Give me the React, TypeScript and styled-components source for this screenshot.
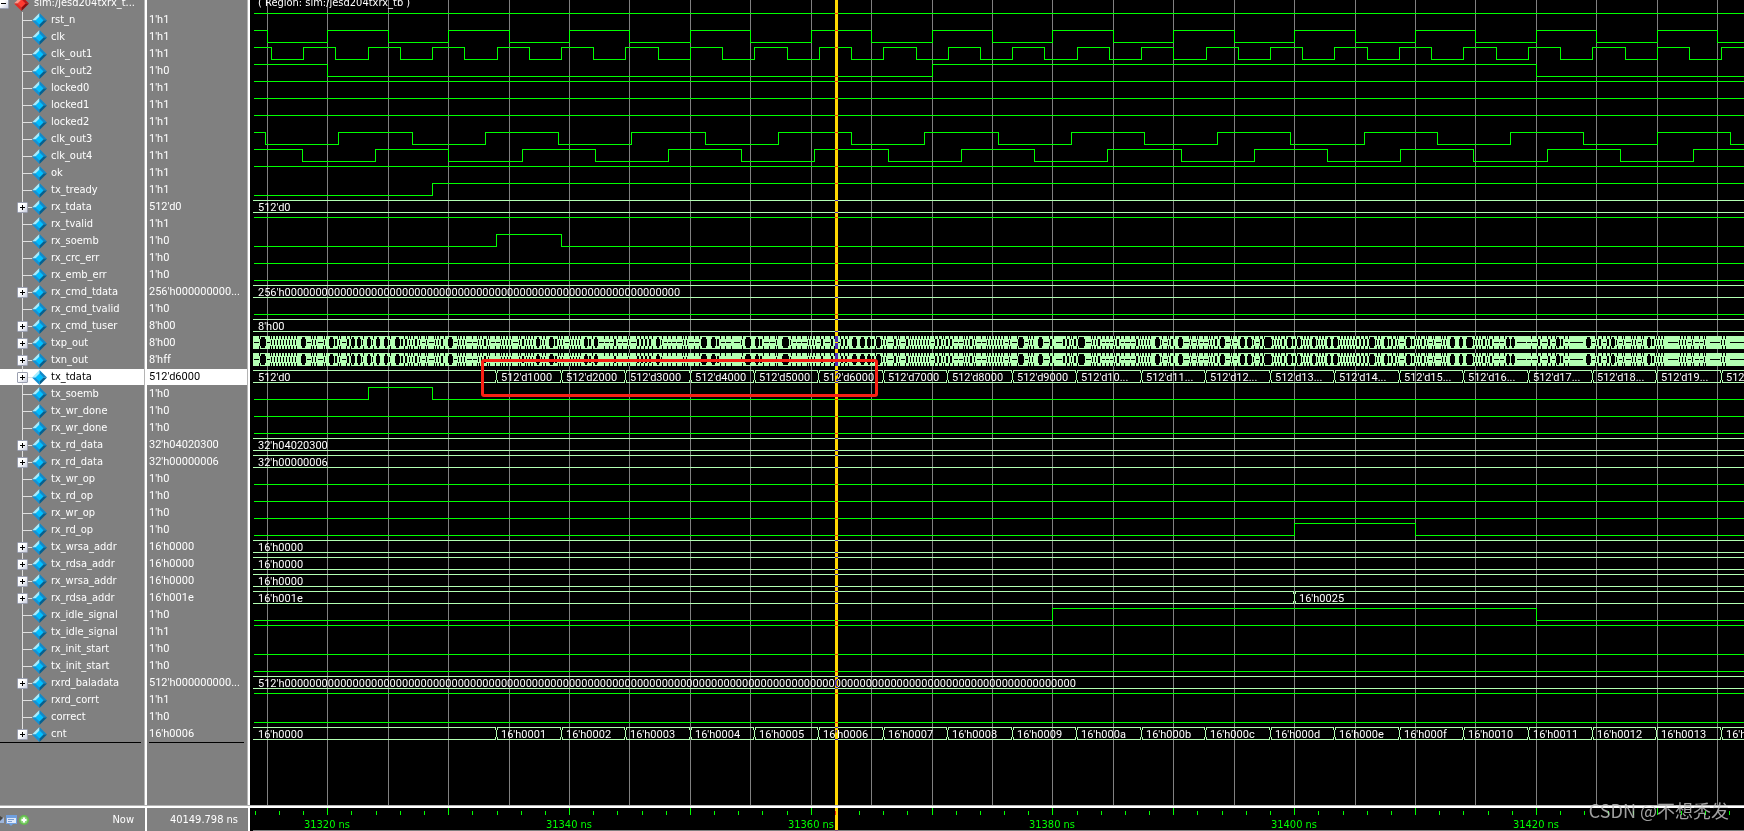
import React, { useEffect, useState } from "react";
import styled, { createGlobalStyle, css } from "styled-components";

const GlobalStyle = createGlobalStyle`
  html, body, #root { height: 100%; }
  body {
    margin: 0;
    overflow: hidden;
    background: #000;
    color: #fff;
    font: 11px/16px "DejaVu Sans Condensed", "DejaVu Sans", sans-serif;
  }
  * { box-sizing: border-box; }
`;

/* ---------- time axis ---------- */

const ORIGIN_NS = 31320;
const ORIGIN_X = 77.3; // wave-panel x of ORIGIN_NS
const PX_PER_NS = 12.086;
const SIDE_WIDTH = 250;
const LEFT = 4;
const RIGHT = 4000;
const GREEN = "#00ff00";
const BUS = "#b3ffb3";

const timeX = (ns: number) => Math.round(ORIGIN_X + (ns - ORIGIN_NS) * PX_PER_NS);

function useWaveWidth() {
  const [width, setWidth] = useState(() => window.innerWidth - SIDE_WIDTH);
  useEffect(() => {
    const update = () => setWidth(window.innerWidth - SIDE_WIDTH);
    window.addEventListener("resize", update);
    return () => window.removeEventListener("resize", update);
  }, []);
  return width;
}

/* ---------- signal data ---------- */

type Wave =
  | { kind: "flat"; level: 0 | 1 }
  | { kind: "bits"; start: 0 | 1; edges: number[] }
  | { kind: "bus"; edges: number[]; labels: string[] }
  | { kind: "dense" };

interface Signal {
  name: string;
  value: string;
  wave: Wave;
  expandable?: boolean;
  selected?: boolean;
}

const every = (first: number, step: number) => {
  const out: number[] = [];
  for (let x = first; x < RIGHT; x += step) out.push(Math.round(x));
  return out;
};

const low: Wave = { kind: "flat", level: 0 };
const high: Wave = { kind: "flat", level: 1 };
const bits = (start: 0 | 1, ...edges: number[]): Wave => ({ kind: "bits", start, edges });
const hold = (label: string): Wave => ({ kind: "bus", edges: [], labels: [label] });

const userEdges = every(246.2, 64.46);
const dataLabels = ["512'd0"].concat(
  userEdges.map((_, i) => (i < 9 ? `512'd${i + 1}000` : `512'd${i + 1}...`))
);
const countLabels = userEdges.map((_, i) => `16'h${(i + 1).toString(16).padStart(4, "0")}`);

const bit = (name: string, value: string, wave: Wave): Signal => ({ name, value, wave });
const bus = (name: string, value: string, wave: Wave, selected = false): Signal => ({
  name, value, wave, selected, expandable: true,
});

const signals: Signal[] = [
  bit("rst_n", "1'h1", high),
  bit("clk", "1'h1", bits(1, ...every(ORIGIN_X - 5 * PX_PER_NS, 5 * PX_PER_NS))),
  bit("clk_out1", "1'h1", bits(1, ...every(20.9, 32.23))),
  bit("clk_out2", "1'h0", bits(1, 77, 682, 1286)),
  bit("locked0", "1'h1", high),
  bit("locked1", "1'h1", high),
  bit("locked2", "1'h1", high),
  bit("clk_out3", "1'h1", bits(1, ...every(15.1, 73.24))),
  bit("clk_out4", "1'h1", bits(1, ...every(51.9, 73.22))),
  bit("ok", "1'h1", high),
  bit("tx_tready", "1'h1", bits(0, 182)),
  bus("rx_tdata", "512'd0", hold("512'd0")),
  bit("rx_tvalid", "1'h1", high),
  bit("rx_soemb", "1'h0", bits(0, 246, 311)),
  bit("rx_crc_err", "1'h0", low),
  bit("rx_emb_err", "1'h0", low),
  bus("rx_cmd_tdata", "256'h000000000...", hold("256'h" + "0".repeat(64))),
  bit("rx_cmd_tvalid", "1'h0", low),
  bus("rx_cmd_tuser", "8'h00", hold("8'h00")),
  bus("txp_out", "8'h00", { kind: "dense" }),
  bus("txn_out", "8'hff", { kind: "dense" }),
  bus("tx_tdata", "512'd6000", { kind: "bus", edges: userEdges, labels: dataLabels }, true),
  bit("tx_soemb", "1'h0", bits(0, 118, 182)),
  bit("tx_wr_done", "1'h0", low),
  bit("rx_wr_done", "1'h0", low),
  bus("tx_rd_data", "32'h04020300", hold("32'h04020300")),
  bus("rx_rd_data", "32'h00000006", hold("32'h00000006")),
  bit("tx_wr_op", "1'h0", low),
  bit("tx_rd_op", "1'h0", low),
  bit("rx_wr_op", "1'h0", low),
  bit("rx_rd_op", "1'h0", bits(0, 1044, 1165)),
  bus("tx_wrsa_addr", "16'h0000", hold("16'h0000")),
  bus("tx_rdsa_addr", "16'h0000", hold("16'h0000")),
  bus("rx_wrsa_addr", "16'h0000", hold("16'h0000")),
  bus("rx_rdsa_addr", "16'h001e", { kind: "bus", edges: [1044], labels: ["16'h001e", "16'h0025"] }),
  bit("rx_idle_signal", "1'h0", bits(0, 802, 1286)),
  bit("tx_idle_signal", "1'h1", high),
  bit("rx_init_start", "1'h0", low),
  bit("tx_init_start", "1'h0", low),
  bus("rxrd_baladata", "512'h000000000...", hold("512'h" + "0".repeat(128))),
  bit("rxrd_corrt", "1'h1", high),
  bit("correct", "1'h0", low),
  bus("cnt", "16'h0006", { kind: "bus", edges: userEdges, labels: ["16'h0000", ...countLabels] }),
];

/* ---------- waveform drawing ---------- */

function bitsPath(start: 0 | 1, edges: number[]) {
  let level = start;
  const y = () => (level ? 1.5 : 13.5);
  let d = `M${LEFT} ${y()}`;
  for (const e of edges) {
    d += `H${e + 0.5}`;
    level = level ? 0 : 1;
    d += `V${y()}`;
  }
  return d + `H${RIGHT}`;
}

function busPath(edges: number[]) {
  let d = "";
  let x = LEFT - 1;
  for (const e of [...edges, RIGHT]) {
    const end = e === RIGHT ? e : e - 1;
    d += `M${x} 1.5H${end}M${x} 13.5H${end}`;
    if (e !== RIGHT) {
      d += `M${e - 0.5} 1V4M${e - 0.5} 11V14M${e + 0.5} 4V11M${e + 1.5} 1V4M${e + 1.5} 11V14`;
    }
    x = e + 1;
  }
  return d;
}

/* [x, width] of the stable values inside the fast serial lanes */
const stable: [number, number][] = [
  [10, 5], [51, 4], [79, 4], [101, 3], [107, 3], [117, 3], [126, 3], [134, 3], [145, 4], [198, 4],
  [286, 3], [299, 4], [319, 3], [334, 3], [344, 3], [406, 3], [451, 5], [461, 4], [475, 5], [495, 5],
  [505, 3], [532, 6], [602, 4], [610, 4], [617, 3], [626, 4], [713, 6], [768, 5], [788, 4], [798, 5],
  [828, 6], [905, 4], [928, 4], [970, 4], [990, 4], [997, 4], [1014, 7], [1037, 4], [1047, 3],
  [1062, 3], [1077, 3], [1083, 4], [1119, 5], [1134, 3], [1156, 4], [1200, 4], [1209, 3], [1216, 6],
  [1256, 3], [1261, 3], [1306, 3], [1336, 4], [1361, 3], [1397, 3],
];
const settled: [number, number][] = [
  [484, 6], [806, 6], [1267, 9], [1320, 13], [1418, 10], [1460, 10], [1480, 14],
];

function densePath() {
  let seed = 7;
  const rnd = () => {
    seed = (seed * 16807) % 2147483647;
    return seed / 2147483647;
  };
  const box = (x: number, y: number, w: number, h: number) => `M${x} ${y}h${w}v${h}h${-w}z`;
  let d = "";
  let x = LEFT;
  while (x < RIGHT) {
    const wide = stable.find(([s]) => s >= x && s < x + 4);
    const flat = settled.find(([s]) => s >= x && s < x + 4);
    if (wide) {
      x = wide[0];
      const w = wide[1];
      d += box(x, 4, w + 1, 7) + box(x + 1, 2, w - 1, 11);
      x += w + 2;
      continue;
    }
    if (flat) {
      d += box(flat[0], 7, flat[1], 1);
      x = flat[0] + flat[1] + 1;
      continue;
    }
    const r = rnd();
    const calm = x > 1230;
    if (r < (calm ? 0.5 : 0.3)) {
      const w = 3 + Math.floor(rnd() * 3);
      d += box(x, 7, w, 1) + box(x + w, 1, 1, 3) + box(x + w, 11, 1, 3);
      x += w + 1;
    } else if (r < 0.82) {
      d += box(x, 5, 1, 5) + box(x + 1, 1, 1, 3) + box(x + 1, 11, 1, 3);
      x += 3;
    } else {
      d += box(x, 4, 2, 7) + box(x + 3, 1, 1, 3) + box(x + 3, 11, 1, 3);
      x += 4;
    }
  }
  return d;
}
const DENSE = densePath();

function WaveDrawing({ wave, width }: { wave: Wave; width: number }) {
  switch (wave.kind) {
    case "flat":
      return <path d={bitsPath(wave.level, [])} stroke={GREEN} />;
    case "bits":
      return <path d={bitsPath(wave.start, wave.edges)} stroke={GREEN} />;
    case "dense":
      return (
        <>
          <path d={`M${LEFT - 1} 1H${RIGHT}V14H${LEFT - 1}Z`} fill={BUS} />
          <path d={DENSE} fill="#000" />
        </>
      );
    case "bus":
      return (
        <>
          <path d={busPath(wave.edges)} stroke={BUS} />
          {wave.labels.map((label, i) => {
            const x = i === 0 ? 8 : wave.edges[i - 1] + 5;
            return x < width ? (
              <WaveLabel key={i} x={x} y={12}>
                {label}
              </WaveLabel>
            ) : null;
          })}
        </>
      );
  }
}

/* ---------- layout ---------- */

const Window = styled.main`
  height: 100vh;
  display: grid;
  grid-template-columns: 147px 103px minmax(0, 1fr);
  grid-template-rows: minmax(0, 1fr) 25px;
`;

const Column = styled.section`
  background: #808080;
  border-right: 2px solid #fff;
  box-shadow: inset -1px 0 #b4b4b4;
  overflow: hidden;
`;

const List = styled.ul`
  margin: 0;
  padding: 0;
  list-style: none;
`;

const rowBase = css`
  display: flex;
  align-items: center;
  height: 17px;
  white-space: pre;
`;

/* the topmost row is scrolled partly out of view */
const RootRow = styled.div`
  ${rowBase}
  gap: 5px;
  margin: -5px 0 0 -2px;
`;

const NameRow = styled.li<{ $selected?: boolean }>`
  ${rowBase}
  margin-right: 1px;
  color: ${(p) => (p.$selected ? "#000" : "#fff")};
  background: ${(p) => (p.$selected ? "linear-gradient(#fff, #fff) 0 0 / 100% 16px no-repeat" : "none")};
`;

const ValueRow = styled(NameRow)`
  padding-left: 2px;
  font-family: Roboto, "DejaVu Sans Condensed", sans-serif;
`;

const RowText = styled.span`
  height: 17px;
`;

const TreeCell = styled.span<{ $last?: boolean }>`
  display: flex;
  align-items: center;
  width: 32px;
  height: 17px;
  padding-left: 17px;
  background:
    linear-gradient(#e0e0e0, #e0e0e0) 22px 0 / 1px ${(p) => (p.$last ? 9 : 17)}px no-repeat,
    linear-gradient(#e0e0e0, #e0e0e0) 22px 8px / 10px 1px no-repeat;
`;

const ExpandButton = styled.button`
  width: 11px;
  height: 11px;
  padding: 0;
  border: 1px solid #9a9fb0;
  border-radius: 1px;
  background: linear-gradient(135deg, #fff 40%, #c9cede);
  display: flex;
  align-items: center;
  justify-content: center;
  flex: none;
`;

const IconSlot = styled.span`
  display: flex;
  width: 19px;
  flex: none;
`;

const EndRule = styled.hr`
  height: 1px;
  margin: -1px 4px 0 0;
  border: 0;
  background: #000;
`;

const ValueEndRule = styled(EndRule)`
  margin-left: 2px;
`;

const WavePanel = styled.section`
  position: relative;
  overflow: hidden;
  background: #000;
`;

const Backdrop = styled.svg`
  position: absolute;
  inset: 0;
  width: 100%;
  height: 100%;
`;

const WaveTitle = styled.div`
  ${rowBase}
  position: relative;
  margin-top: -5px;
  padding-left: 8px;
`;

const WaveList = styled.div`
  position: relative;
`;

const WaveRow = styled.svg`
  display: block;
  width: 100%;
  height: 17px;
  fill: none;
`;

const WaveLabel = styled.text`
  fill: #fff;
  font-family: Roboto, "DejaVu Sans Condensed", sans-serif;
`;

const Cursor = styled.div`
  position: absolute;
  top: 0;
  bottom: 0;
  left: 585px;
  width: 3px;
  background: #ffd700;
  mix-blend-mode: difference;
`;

const Marker = styled.div`
  position: absolute;
  left: 231px;
  top: 359px;
  width: 397px;
  height: 38px;
  border: 3px solid #f82014;
  border-radius: 3px;
`;

const footerPanel = css`
  border-top: 2px solid #fff;
  box-shadow: 0 -1px #b4b4b4;
  position: relative;
`;

const FooterCell = styled.footer<{ $pad: number }>`
  ${footerPanel}
  background: #808080;
  border-right: 2px solid #fff;
  display: flex;
  align-items: center;
  justify-content: flex-end;
  padding-right: ${(p) => p.$pad}px;
  white-space: pre;
`;

const FooterIcons = styled.span`
  display: flex;
  margin-right: auto;
`;

const Ruler = styled.footer`
  ${footerPanel}
  overflow: hidden;
  background: #000;
`;

const RulerDrawing = styled.svg`
  display: block;
  width: 100%;
  height: 23px;
`;

const Watermark = styled.div`
  position: absolute;
  right: 15px;
  bottom: 8px;
  color: rgba(200, 200, 200, 0.8);
  font: 18px/26px "Noto Sans CJK SC", sans-serif;
  white-space: pre;
`;

/* ---------- icons ---------- */

function Gem({ red = false }: { red?: boolean }) {
  const [light, left, right, dark, core] = red
    ? ["#ff9a8c", "#e02a22", "#c01818", "#8c0c0c", "#ff3b30"]
    : ["#a4ecff", "#1292d6", "#1189c8", "#06608f", "#00bfff"];
  return (
    <svg width="15" height="15" viewBox="0 0 15 15" aria-hidden="true">
      <path d="M7.500 0L0 7.500H4L7.500 4Z" fill={light} />
      <path d="M7.500 0L15 7.500H11L7.500 4Z" fill={right} />
      <path d="M0 7.500L7.500 15V11L4 7.500Z" fill={left} />
      <path d="M15 7.500L7.500 15V11L11 7.500Z" fill={dark} />
      <path d="M7.500 3.500L11.500 7.500L7.500 11.500L3.500 7.500Z" fill={core} />
    </svg>
  );
}

function ExpandGlyph({ open = false }: { open?: boolean }) {
  return (
    <svg width="5" height="5" viewBox="0 0 5 5" shapeRendering="crispEdges" aria-hidden="true">
      <path d={open ? "M0 2h5v1H0z" : "M0 2h5v1H0zM2 0h1v5H2z"} fill="#000" />
    </svg>
  );
}

function StatusIcons() {
  return (
    <svg width="30" height="14" viewBox="0 0 30 14" aria-hidden="true">
      <path d="M0 3L3 5V10H0Z" fill="#444" />
      <path d="M0 8L4 4V10H0Z" fill="#9db5da" />
      <path d="M6 2H17V11H13L11 13L9 11H6Z" fill="#6f9fe0" />
      <path d="M7 5H16V10H7Z" fill="#dfe9fa" />
      <path d="M8 6.500H14M8 8.500H12" stroke="#7c9cd0" />
      <circle cx="24" cy="7" r="5" fill="#62bd4c" />
      <circle cx="24" cy="7" r="3.500" fill="#8ed67c" />
      <path d="M24 4.500V9.500M21.500 7H26.500" stroke="#fff" strokeWidth="2" />
    </svg>
  );
}

/* ---------- panels ---------- */

/* indices from `from` up to the last whose time still lies inside the panel */
const stepsWithin = (width: number, ns: number, from: number) => {
  const out: number[] = [];
  for (let i = from; timeX(ORIGIN_NS + i * ns) < width; i++) out.push(i);
  return out;
};

function Grid({ width }: { width: number }) {
  return (
    <Backdrop shapeRendering="crispEdges" aria-hidden="true">
      {stepsWithin(width, 5, -1).map((i) => (
        <rect key={i} x={timeX(ORIGIN_NS + i * 5)} y="0" width="1" height="100%" fill="#808080" />
      ))}
    </Backdrop>
  );
}

function TimeRuler({ width }: { width: number }) {
  return (
    <Ruler>
      <RulerDrawing>
        {stepsWithin(width, 2, -3).map((i) => {
          const major = i % 5 === 0;
          return (
            <rect
              key={i}
              x={timeX(ORIGIN_NS + i * 2)}
              y={major ? 0 : 3}
              width="1"
              height={major ? 7 : 4}
              fill={GREEN}
            />
          );
        })}
        {stepsWithin(width, 20, 0).map((i) => (
          <text key={i} x={timeX(ORIGIN_NS + i * 20)} y="20" textAnchor="middle" fill={GREEN}>
            {`${ORIGIN_NS + i * 20} ns`}
          </text>
        ))}
        <rect x="3" y="22" width="100%" height="1" fill="#808080" />
      </RulerDrawing>
      <Cursor />
    </Ruler>
  );
}

export default function App() {
  const width = useWaveWidth();
  return (
    <>
      <GlobalStyle />
      <Window>
        <Column aria-label="Signals">
          <RootRow>
            <ExpandButton aria-label="Collapse"><ExpandGlyph open /></ExpandButton>
            <Gem red />
            <RowText>sim:/jesd204txrx_t...</RowText>
          </RootRow>
          <List>
            {signals.map((s, i) => (
              <NameRow key={s.name} $selected={s.selected}>
                <TreeCell $last={i === signals.length - 1}>
                  {s.expandable && (
                    <ExpandButton aria-label={`Expand ${s.name}`}><ExpandGlyph /></ExpandButton>
                  )}
                </TreeCell>
                <IconSlot><Gem /></IconSlot>
                <RowText>{s.name}</RowText>
              </NameRow>
            ))}
          </List>
          <EndRule />
        </Column>

        <Column aria-label="Values">
          <RootRow />
          <List>
            {signals.map((s) => (
              <ValueRow key={s.name} $selected={s.selected}>
                <RowText>{s.value}</RowText>
              </ValueRow>
            ))}
          </List>
          <ValueEndRule />
        </Column>

        <WavePanel aria-label="Waveforms">
          <Grid width={width} />
          <WaveTitle>
            <RowText>( Region: sim:/jesd204txrx_tb )</RowText>
          </WaveTitle>
          <WaveList>
            {signals.map((s) => (
              <WaveRow key={s.name} shapeRendering="crispEdges">
                <WaveDrawing wave={s.wave} width={width} />
              </WaveRow>
            ))}
          </WaveList>
          <Cursor />
          <Marker />
        </WavePanel>

        <FooterCell $pad={11}>
          <FooterIcons><StatusIcons /></FooterIcons>
          Now
        </FooterCell>
        <FooterCell $pad={10}>40149.798 ns</FooterCell>
        <TimeRuler width={width} />
      </Window>
      <Watermark>CSDN @不想秃发</Watermark>
    </>
  );
}
